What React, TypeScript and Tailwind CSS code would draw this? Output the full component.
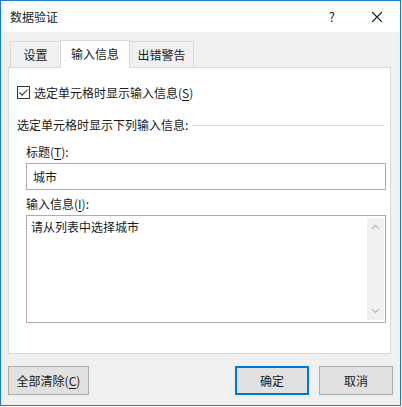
import React from "react";

const font = { fontFamily: '"Microsoft YaHei", "Noto Sans CJK SC", "Noto Sans", sans-serif' };

function U({ children }: { children: React.ReactNode }) {
  return <span className="underline underline-offset-[2px]">{children}</span>;
}

export default function App() {
  return (
    <div
      className="w-[401px] h-[406px] border border-[#1a7fd4] bg-[#f0f0f0] flex flex-col text-[12px] text-[#1a1a1a] leading-[16px]"
      style={font}
    >
      {/* Title bar */}
      <div className="h-[31px] bg-white flex items-center pl-[9px] shrink-0">
        <span>数据验证</span>
        <div className="ml-auto flex items-center">
          <span className="text-[13px] mr-[36px]">?</span>
          <svg width="12" height="12" viewBox="0 0 12 12" className="mr-[17px]">
            <path d="M1 1 L11 11 M11 1 L1 11" stroke="#222" strokeWidth="1.1" fill="none" />
          </svg>
        </div>
      </div>

      {/* Body */}
      <div className="flex-1 flex flex-col pl-[7px] pt-[8px]">
        {/* Tabs */}
        <div className="flex items-end h-[27px] pl-[2px]">
          <div className="w-[50px] h-[26px] border-l border-t border-[#d9d9d9] flex items-center justify-center">
            设置
          </div>
          <div className="w-[70px] h-[28px] -mb-px relative z-10 bg-white border-l border-t border-r border-[#d9d9d9] flex items-center justify-center pb-[2px]">
            输入信息
          </div>
          <div className="w-[64px] h-[26px] border-t border-r border-[#d9d9d9] flex items-center justify-center">
            出错警告
          </div>
        </div>

        {/* Panel */}
        <div className="w-[383px] h-[287px] bg-white border border-[#d9d9d9] flex flex-col">
          <div className="flex items-center h-[13px] mt-[18px] pl-[8px]">
            <div className="w-[13px] h-[13px] border border-[#333] flex items-center justify-center">
              <svg width="11" height="11" viewBox="0 0 11 11">
                <path d="M1.5 5.5 L4.2 8.2 L9.5 2.5" stroke="#333" strokeWidth="1.1" fill="none" />
              </svg>
            </div>
            <span className="ml-[4px]">
              选定单元格时显示输入信息(<U>S</U>)
            </span>
          </div>

          <div className="flex items-center h-[16px] mt-[18px] pl-[8px] pr-[5px]">
            <span>选定单元格时显示下列输入信息:</span>
            <div className="flex-1 h-px bg-[#dcdcdc] ml-[4px]" />
          </div>

          <div className="h-[16px] mt-[11px] pl-[17px]">
            标题(<U>T</U>):
          </div>
          <div className="ml-[17px] mt-[3px] w-[360px] h-[27px] border border-[#adadad] flex items-center pl-[6px]">
            城市
          </div>

          <div className="h-[16px] mt-[6px] pl-[17px]">
            输入信息(<U>I</U>):
          </div>
          <div className="ml-[17px] mt-[3px] w-[360px] h-[108px] border border-[#adadad] flex">
            <div className="flex-1 pl-[4px] pt-[3px]">请从列表中选择城市</div>
            <div className="w-[17px] my-[2px] mr-[1px] bg-[#f0f0f0] flex flex-col items-center justify-between py-[6px]">
              <svg width="9" height="6" viewBox="0 0 9 6">
                <path d="M1 5 L4.5 1.5 L8 5" stroke="#bdbdbd" strokeWidth="1.3" fill="none" />
              </svg>
              <svg width="9" height="6" viewBox="0 0 9 6">
                <path d="M1 1 L4.5 4.5 L8 1" stroke="#bdbdbd" strokeWidth="1.3" fill="none" />
              </svg>
            </div>
          </div>
        </div>

        {/* Buttons */}
        <div className="flex mt-[12px]">
          <button className="w-[81px] h-[29px] border border-[#adadad] bg-[#e1e1e1] flex items-center justify-center">
            全部清除(<U>C</U>)
          </button>
          <button className="ml-[146px] w-[74px] h-[29px] border-2 border-[#0078d7] bg-[#e1e1e1] flex items-center justify-center">
            确定
          </button>
          <button className="ml-[10px] w-[74px] h-[29px] border border-[#adadad] bg-[#e1e1e1] flex items-center justify-center">
            取消
          </button>
        </div>
      </div>
    </div>
  );
}
